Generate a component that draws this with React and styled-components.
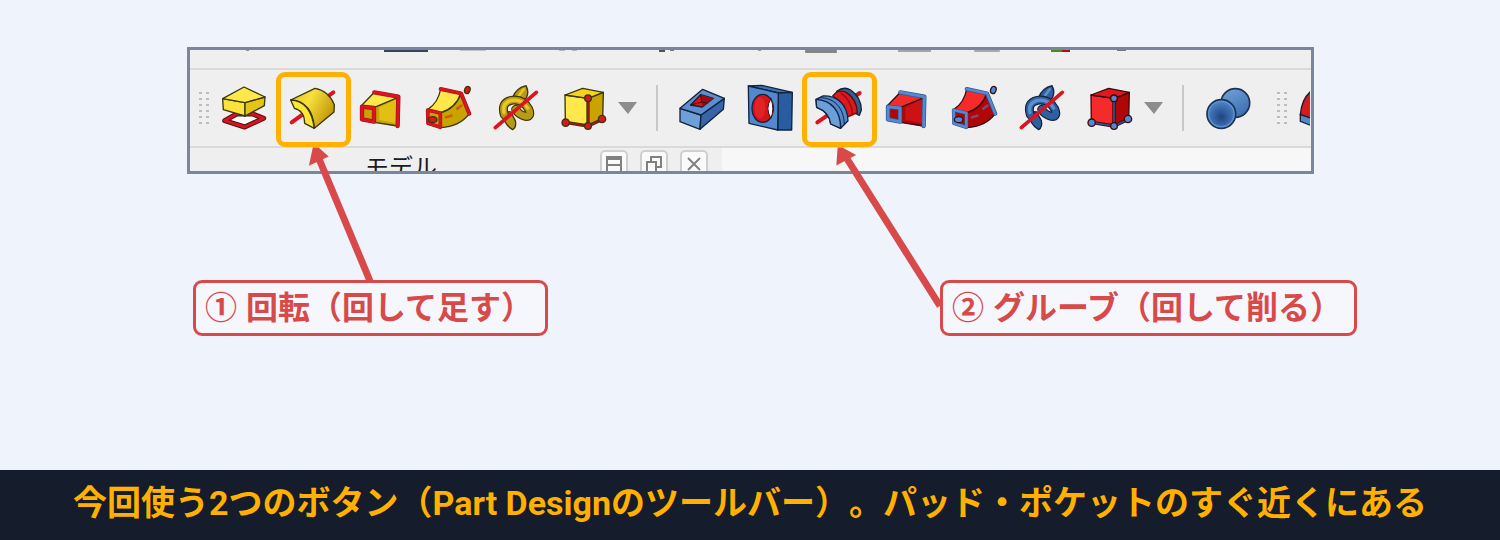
import React from 'react';
import styled, { createGlobalStyle, css } from 'styled-components';

const GlobalStyle = createGlobalStyle`
  *,
  *::after {
    box-sizing: border-box;
  }

  body {
    margin: 0;
    background-color: #eff3fc;
    font-family: 'Noto Sans CJK JP', 'Noto Sans', sans-serif;
    text-spacing-trim: space-all;
  }
`;

const Page = styled.div`
  display: flex;
  flex-direction: column;
  min-height: 100vh;
`;

const Main = styled.main`
  flex: 1;
  padding-top: 47px;
`;

const Panel = styled.section`
  margin: 0 186px 0 187px;
  border: 3px solid #7a869f;
  background-color: #efefef;
`;

const TopStrip = styled.div`
  height: 18px;
  overflow: hidden;

  svg {
    display: block;
  }
`;

const Toolbar = styled.div`
  display: flex;
  align-items: center;
  height: 80px;
  padding-left: 9px;
  border-top: 2px solid #dadada;
  border-bottom: 2px solid #dadada;
`;

const Handle = styled.svg`
  flex: none;
  width: 11px;
  height: 36px;
  fill: #bdbdbd;
  margin-left: ${({ $gap }) => ($gap ? '15px' : '0')};
  margin-right: ${({ $gap }) => ($gap ? '11px' : '0')};
`;

const ToolButton = styled.button`
  position: relative;
  flex: none;
  width: 68px;
  height: 76px;
  padding: 0;
  border: none;
  background: none;
  cursor: pointer;

  ${({ $marked }) =>
    $marked &&
    css`
      &::after {
        content: '';
        position: absolute;
        top: 2px;
        left: -2px;
        width: 75px;
        height: 75px;
        border: 5px solid #ffb000;
        border-radius: 9px;
      }
    `}
`;

const ToolIcon = styled.svg`
  display: block;
  width: 68px;
  height: 76px;
  stroke-linejoin: round;
  stroke-linecap: round;
`;

const CutIcon = styled.svg`
  flex: none;
  width: 11px;
  height: 76px;
`;

const ArrowSvg = styled.svg`
  position: absolute;
  z-index: 2;
  top: 76px;
  left: 0;
  width: 140px;
  height: 164px;
  overflow: visible;
  fill: none;
  stroke: #d84a4a;
  stroke-width: 7;
  pointer-events: none;
`;

const DropButton = styled.button`
  flex: none;
  display: flex;
  align-items: center;
  width: 18px;
  height: 46px;
  padding: 0;
  border: none;
  background: none;
  cursor: pointer;

  svg {
    flex: none;
    width: 19px;
    height: 12px;
    fill: #8c8c8c;
  }
`;

const Separator = styled.span`
  flex: none;
  width: 2px;
  height: 46px;
  margin: 0 10px 0 20px;
  background-color: #c9c9c9;
`;

const DockStrip = styled.div`
  display: flex;
  height: 23px;
  overflow: hidden;
  background-color: #f7f7f7;
`;

const DockHeader = styled.div`
  display: flex;
  align-items: flex-start;
  gap: 12px;
  width: 532px;
  padding-right: 14px;
  background-color: #efefef;
`;

const DockTitle = styled.span`
  flex: 1;
  padding-left: 24px;
  text-align: center;
  font-size: 24px;
  line-height: 36px;
  color: #1c1c1c;
`;

const DockButton = styled.button`
  width: 28px;
  height: 28px;
  margin-top: 2px;
  padding: 0;
  border: 2px solid #cfcfcf;
  border-radius: 5px;
  background-color: #fafafa;

  svg {
    display: block;
    width: 24px;
    height: 24px;
    fill: none;
    stroke: #808080;
    stroke-width: 2;
  }
`;

const Labels = styled.div`
  display: flex;
  justify-content: space-between;
  margin-top: 106px;
  padding: 0 143px 0 193px;
`;

const Label = styled.p`
  margin: 0;
  padding: 0 12px 0 9px;
  border: 3px solid #d84a4a;
  border-radius: 9px;
  background-color: #f6f7fc;
  color: #d84a4a;
  font-family: 'Liberation Sans', 'Noto Sans CJK JP', sans-serif;
  font-size: 32px;
  font-weight: 700;
  line-height: 50px;
  white-space: nowrap;
`;

const Caption = styled.footer`
  padding: 8px 0 12px;
  background-color: #151c2b;
  color: #ffb000;
  font-family: Roboto, 'Noto Sans CJK JP', sans-serif;
  font-size: 34px;
  font-weight: 700;
  line-height: 50px;
  text-align: center;
  white-space: nowrap;
`;

// add = yellow solid with red sketch, cut = red solid with blue sketch
const add = {
  light: '#ffe94a',
  mid: '#f2d420',
  dark: '#c9a400',
  edge: '#3a3608',
  line: '#dc1420',
  lineDark: '#a8101a',
};

const cut = {
  light: '#f52a2a',
  mid: '#e01a1c',
  dark: '#b00608',
  edge: '#3a0a10',
  line: '#5588cc',
  lineDark: '#2c5590',
};

const Icon = ({ children }) => (
  <ToolIcon viewBox="0 0 204 228" aria-hidden="true">
    {children}
  </ToolIcon>
);

const PadIcon = () => (
  <Icon>
    <path d="M44 152 L80 132 H128 L161 145 L104 171Z" fill="#fff" stroke="#5c0a0e" strokeWidth="15" />
    <path d="M44 152 L80 132 H128 L161 145 L104 171Z" fill="none" stroke="#cf1722" strokeWidth="9" />
    <g stroke={add.edge} strokeWidth="4">
      <path d="M38 86 L105 98 V138 L40 119Z" fill="#fbe23c" />
      <path d="M105 98 L165 81 L163 107 L105 138Z" fill="#e5c514" />
      <path d="M102 51 L165 81 L105 98 L38 86Z" fill={add.light} />
    </g>
  </Icon>
);

const RevolveIcon = () => (
  <Icon>
    <defs>
      <linearGradient id="revolve" x1="0" y1="0" x2="1" y2="0.5">
        <stop offset="0" stopColor="#e2bd10" />
        <stop offset="0.45" stopColor="#f8e040" />
        <stop offset="1" stopColor="#c29a08" />
      </linearGradient>
    </defs>
    <path d="M41 157 L166 67" stroke="#dc1420" strokeWidth="12" />
    <g stroke={add.edge} strokeWidth="4">
      <path d="M38 90 L111 55 Q152 62 169 104 L168 126 L109 175 Q104 96 38 90Z" fill="url(#revolve)" />
      <path d="M38 90 Q98 92 109 175 L80 160 Q80 122 49 115Z" fill="#fde637" />
    </g>
  </Icon>
);

const LoftIcon = ({ c }) => (
  <Icon>
    <path d="M157 80 L155 170 L85 157 V110Z" fill={c.dark} />
    <path d="M150 88 V160 L100 150 V112Z" fill={c.mid} opacity="0.6" />
    <path d="M85 67 L157 80 L85 110 L46 107Z" fill={c.light} />
    <path d="M85 67 L46 107 M157 82 L85 112 M85 157 L155 168" stroke={c.edge} strokeWidth="4" />
    <path d="M85 67 L157 80 L155 168" fill="none" stroke={c.lineDark} strokeWidth="13" />
    <path d="M85 67 L157 80 L155 168" fill="none" stroke={c.line} strokeWidth="9" />
    <path d="M48 110 L84 114 V155 L48 148Z" fill={c.dark} stroke={c.lineDark} strokeWidth="13" />
    <path d="M48 110 L84 114 V155 L48 148Z" fill="none" stroke={c.line} strokeWidth="9" />
  </Icon>
);

const PipeIcon = ({ c }) => (
  <Icon>
    <g stroke={c.edge} strokeWidth="4">
      <path d="M141 70 L166 131 Q137 170 80 173 V128 Q124 116 141 70Z" fill={c.dark} />
      <path d="M80 57 Q73 97 42 118 L80 128 Q124 116 141 70Z" fill={c.light} />
    </g>
    <path d="M96 142 L112 137 M130 116 L142 107" stroke={c.line} strokeWidth="8" opacity="0.5" />
    <path d="M80 57 L141 70 L166 131" fill="none" stroke={c.lineDark} strokeWidth="12" />
    <path d="M80 57 L141 70 L166 131" fill="none" stroke={c.line} strokeWidth="8" />
    <path d="M41 120 L79 129 V172 L42 160Z" fill={c.dark} stroke={c.lineDark} strokeWidth="11" />
    <path d="M41 120 L79 129 V172 L42 160Z" fill="none" stroke={c.line} strokeWidth="8" />
    <ellipse cx="56" cy="149" rx="13" ry="9" fill={c.line} stroke={c.edge} strokeWidth="4" />
    <ellipse cx="160" cy="60" rx="8" ry="11" fill={c.line} stroke={c.edge} strokeWidth="4" transform="rotate(20 160 60)" />
  </Icon>
);

const HelixIcon = ({ fill, shade, edge }) => (
  <Icon>
    <g fill={shade} stroke={edge} strokeWidth="4">
      <path d="M92 82 Q104 53 132 47 Q142 66 133 84 L112 94Z" />
      <path d="M62 124 Q64 164 92 179 Q104 172 100 152 L86 126Z" />
    </g>
    <path d="M112 76 L125 58" stroke={fill} strokeWidth="8" />
    <g fill="none">
      <path d="M67 134 Q56 98 88 91 Q122 85 140 117 Q150 141 130 139 Q110 134 101 118" stroke={edge} strokeWidth="27" />
      <path d="M67 134 Q56 98 88 91 Q122 85 140 117 Q150 141 130 139 Q110 134 101 118" stroke={shade} strokeWidth="20" />
      <path d="M66 128 Q60 98 88 91 Q120 86 137 114" stroke={fill} strokeWidth="10" />
    </g>
    <path d="M40 173 L163 67" stroke="#dc1420" strokeWidth="11" />
  </Icon>
);

const BoxIcon = ({ c }) => (
  <Icon>
    <g stroke={c.edge} strokeWidth="4">
      <path d="M45 75 L114 85 V168 L46 157Z" fill={c.light} />
      <path d="M114 85 L160 67 L158 148 L114 168Z" fill={c.dark} />
      <path d="M45 75 L98 55 L160 67 L114 85Z" fill={c.mid} />
    </g>
    <path d="M114 85 V168 M46 157 L114 168 L158 148" fill="none" stroke={c.edge} strokeWidth="10" />
    <path d="M114 85 V168 M46 157 L114 168 L158 148" fill="none" stroke={c.lineDark} strokeWidth="5" />
    <g fill={c.line} stroke={c.edge} strokeWidth="4">
      <circle cx="114" cy="85" r="10" />
      <circle cx="47" cy="158" r="11" />
      <circle cx="114" cy="168" r="10" />
      <circle cx="156" cy="147" r="11" />
    </g>
  </Icon>
);

const PocketIcon = () => (
  <Icon>
    <g stroke="#10233f" strokeWidth="4">
      <path d="M36 115 L99 135 L96 178 L36 155Z" fill="#6f9fd8" />
      <path d="M99 135 L169 85 L166 118 L96 178Z" fill="#3765a8" />
      <path d="M36 115 L104 58 L169 85 L99 135Z" fill="#5b8fd0" />
      <path d="M68 105 L98 74 L136 85 L103 111Z" fill="#d81418" />
    </g>
    <path d="M98 74 L101 96 L103 111 L136 85Z" fill="#a30a0e" />
    <path d="M98 74 L101 96 L68 105 M101 96 L116 99" fill="none" stroke="#3a0a10" strokeWidth="3" />
  </Icon>
);

const HoleIcon = () => (
  <Icon>
    <g stroke="#10233f" strokeWidth="4">
      <path d="M37 48 L77 46 L169 67 L127 69Z" fill="#3f72b5" />
      <path d="M127 69 L169 67 L167 180 H125Z" fill="#2a5ca0" />
      <path d="M37 48 L127 69 L125 180 L39 160Z" fill="#5289cc" />
      <ellipse cx="80" cy="115" rx="32" ry="42" fill="#d4141a" />
    </g>
    <ellipse cx="72" cy="113" rx="16" ry="32" fill="#e32226" />
    <path d="M105 86 Q86 115 105 145 Q116 116 105 86Z" fill="#fff" stroke="#4a0a10" strokeWidth="3" />
  </Icon>
);

const GrooveIcon = () => (
  <Icon>
    <path d="M40 157 L167 69" stroke="#dc1420" strokeWidth="12" />
    <g stroke="#10233f" strokeWidth="4">
      <path d="M98 64 Q120 48 140 60 Q172 82 172 120 L166 136 L150 128 Q146 84 98 64Z" fill="#34608f" />
      <path d="M86 78 L98 66 Q114 60 128 68 Q158 88 160 128 L128 142 Q120 96 86 78Z" fill="#dc1a1e" stroke="#5c0a0e" />
      <path d="M36 88 L56 78 C94 76 130 98 132 152 L110 175 L80 162 Q76 126 38 112Z" fill="#5289cc" />
      <path d="M36 88 C80 90 110 120 110 175 L80 162 Q76 126 38 112Z" fill="#6c9ed8" />
    </g>
    <path d="M46 83 C88 82 120 110 121 164" fill="none" stroke="#10233f" strokeWidth="3" />
    <path d="M112 70 Q142 90 146 134" fill="none" stroke="#a00c10" strokeWidth="5" />
  </Icon>
);

const BooleanIcon = () => (
  <Icon>
    <defs>
      <linearGradient id="ballBack" x1="0" y1="0" x2="0.6" y2="1">
        <stop offset="0" stopColor="#76a5dc" />
        <stop offset="1" stopColor="#3d70b4" />
      </linearGradient>
      <radialGradient id="ballFront" cx="0.5" cy="0.6">
        <stop offset="0" stopColor="#1d4480" />
        <stop offset="1" stopColor="#4a7fc4" />
      </radialGradient>
    </defs>
    <g stroke="#1c3350" strokeWidth="5">
      <circle cx="124" cy="99" r="43" fill="url(#ballBack)" />
      <circle cx="82" cy="132" r="43" fill="url(#ballFront)" />
    </g>
    <circle cx="82" cy="132" r="38" fill="none" stroke="#5d92d2" strokeWidth="4" />
  </Icon>
);

const DotHandle = ({ gap }) => (
  <Handle viewBox="0 0 11 36" $gap={gap} aria-hidden="true">
    {[2, 8, 14, 20, 26, 32].map((y) => (
      <React.Fragment key={y}>
        <rect x="0" y={y} width="3" height="2" />
        <rect x="7" y={y} width="3" height="2" />
      </React.Fragment>
    ))}
  </Handle>
);

const DropDown = ({ label }) => (
  <DropButton type="button" aria-label={label}>
    <svg viewBox="0 0 19 12">
      <path d="M0 0 H19 L10 12Z" />
    </svg>
  </DropButton>
);

const Arrow = ({ shaft, head }) => (
  <ArrowSvg viewBox="0 0 140 164" aria-hidden="true">
    <path d={shaft} />
    <path d={head} fill="#d84a4a" strokeWidth="3" />
  </ArrowSvg>
);

const yellowHelix = { fill: '#e8c828', shade: '#b89a14', edge: '#3a3608' };
const blueHelix = { fill: '#5b8fd0', shade: '#2f5f9f', edge: '#10233f' };

const App = () => {
  return (
    <Page>
      <GlobalStyle />
      <Main>
        <Panel>
          <TopStrip>
            <svg width="1120" height="3" viewBox="0 0 1120 3" aria-hidden="true">
              <rect x="56" width="3" height="1" fill="#9a8f80" />
              <rect x="194" width="44" height="2" fill="#34435c" />
              <rect x="270" width="26" height="1" fill="#c4c4c8" />
              <rect x="369" width="6" height="1" fill="#b5b5b8" />
              <rect x="382" width="5" height="1" fill="#b5b5b8" />
              <rect x="469" width="6" height="2" fill="#555" />
              <rect x="480" width="4" height="1" fill="#777" />
              <rect x="568" width="3" height="1" fill="#999" />
              <rect x="615" width="32" height="3" rx="1" fill="#858585" />
              <rect x="708" width="33" height="2" fill="#a5a5a5" />
              <rect x="784" width="26" height="2" rx="1" fill="#aaa" />
              <rect x="861" width="11" height="2" fill="#4c8a18" />
              <rect x="872" width="8" height="2" fill="#a01818" />
              <rect x="927" width="9" height="1" fill="#777" />
            </svg>
          </TopStrip>
          <Toolbar>
            <DotHandle />
            <ToolButton type="button" aria-label="パッド">
              <PadIcon />
            </ToolButton>
            <ToolButton type="button" aria-label="回転" $marked>
              <RevolveIcon />
              <Arrow shaft="M92 135 L39 8" head="M36 3 L40 3 L48 10 L33 17Z" />
            </ToolButton>
            <ToolButton type="button" aria-label="加算ロフト">
              <LoftIcon c={add} />
            </ToolButton>
            <ToolButton type="button" aria-label="加算パイプ">
              <PipeIcon c={add} />
            </ToolButton>
            <ToolButton type="button" aria-label="加算らせん">
              <HelixIcon {...yellowHelix} />
            </ToolButton>
            <ToolButton type="button" aria-label="加算ボックス">
              <BoxIcon c={add} />
            </ToolButton>
            <DropDown label="加算プリミティブ" />
            <Separator />
            <ToolButton type="button" aria-label="ポケット">
              <PocketIcon />
            </ToolButton>
            <ToolButton type="button" aria-label="ホール">
              <HoleIcon />
            </ToolButton>
            <ToolButton type="button" aria-label="グルーブ" $marked>
              <GrooveIcon />
              <Arrow shaft="M136 160 L40 8" head="M35 3 L38 3 L49 9 L34 17Z" />
            </ToolButton>
            <ToolButton type="button" aria-label="減算ロフト">
              <LoftIcon c={cut} />
            </ToolButton>
            <ToolButton type="button" aria-label="減算パイプ">
              <PipeIcon c={cut} />
            </ToolButton>
            <ToolButton type="button" aria-label="減算らせん">
              <HelixIcon {...blueHelix} />
            </ToolButton>
            <ToolButton type="button" aria-label="減算ボックス">
              <BoxIcon c={cut} />
            </ToolButton>
            <DropDown label="減算プリミティブ" />
            <Separator />
            <ToolButton type="button" aria-label="ブーリアン">
              <BooleanIcon />
            </ToolButton>
            <DotHandle gap />
            <CutIcon viewBox="0 0 33 228" aria-hidden="true">
              <g stroke="#1c1c30" strokeWidth="4">
                <path d="M40 60 Q8 84 4 134 L40 146Z" fill="#d81a1e" />
                <path d="M4 134 L40 146 V168 L4 154Z" fill="#5289cc" />
              </g>
            </CutIcon>
          </Toolbar>
          <DockStrip>
            <DockHeader>
              <DockTitle>モデル</DockTitle>
              <DockButton type="button" aria-label="折りたたむ">
                <svg viewBox="0 0 24 24">
                  <path d="M5 5 H19 V21 H5Z M5 7 H19 M5 13 H19" />
                </svg>
              </DockButton>
              <DockButton type="button" aria-label="フロート">
                <svg viewBox="0 0 24 24">
                  <path d="M9 10 V5 H19 V15 H14 M5 10 H14 V20 H5Z" />
                </svg>
              </DockButton>
              <DockButton type="button" aria-label="閉じる">
                <svg viewBox="0 0 24 24">
                  <path d="M6 6 L18 18 M18 6 L6 18" />
                </svg>
              </DockButton>
            </DockHeader>
          </DockStrip>
        </Panel>
        <Labels>
          <Label>① 回転（回して足す）</Label>
          <Label>② グルーブ（回して削る）</Label>
        </Labels>
      </Main>
      <Caption>今回使う2つのボタン（Part Designのツールバー）。パッド・ポケットのすぐ近くにある</Caption>
    </Page>
  );
};

export default App;
